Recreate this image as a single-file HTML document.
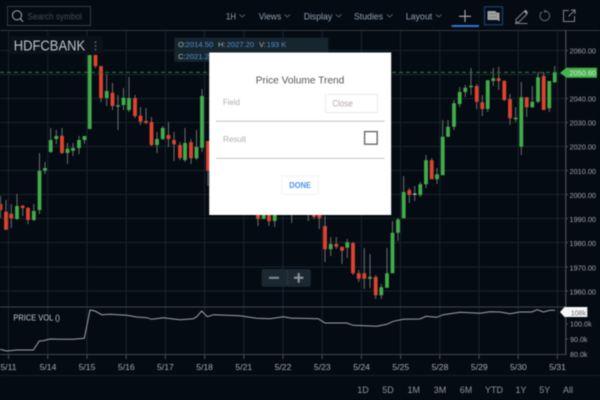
<!DOCTYPE html>
<html><head><meta charset="utf-8"><style>
html,body{margin:0;padding:0;background:#050b13;width:600px;height:400px;overflow:hidden}
svg{display:block;filter:blur(.45px)}
text{font-family:"Liberation Sans",sans-serif}
</style></head><body>
<svg width="600" height="400" viewBox="0 0 600 400" xmlns="http://www.w3.org/2000/svg">
<rect width="600" height="400" fill="#050b13"/>
<!-- grid -->
<path stroke="#18242d" stroke-width="1" fill="none" d="M0 50.5H566M0 74.5H566M0 98.5H566M0 122.5H566M0 146.5H566M0 170.5H566M0 194.5H566M0 218.5H566M0 242.5H566M0 267H566M0 291H566"/>
<path stroke="#18242d" stroke-width="1" fill="none" d="M8.5 31V354M47.7 31V354M87 31V354M126.2 31V354M165.4 31V354M204.6 31V354M243.8 31V354M283 31V354M322.2 31V354M361.4 31V354M400.6 31V354M439.8 31V354M479 31V354M518.2 31V354M557.4 31V354"/>
<!-- chrome lines -->
<path stroke="#30383e" stroke-width="1" fill="none" d="M0 30.5H600"/>
<path stroke="#3c4449" stroke-width="1" fill="none" d="M0 307H566M0 354.5H566"/>
<path stroke="#4a5055" stroke-width="1.2" fill="none" d="M565.8 30V355"/>
<path stroke="#4a5055" stroke-width="1" fill="none" d="M8.5 355V359M47.7 355V359M87 355V359M126.2 355V359M165.4 355V359M204.6 355V359M243.8 355V359M283 355V359M322.2 355V359M361.4 355V359M400.6 355V359M439.8 355V359M479 355V359M518.2 355V359M557.4 355V359"/>
<path stroke="#161e25" stroke-width="1" fill="none" d="M0 375.5H600"/>
<!-- wicks -->
<path stroke="#6a6e72" stroke-width="1" fill="none" d="M.5 196V218M6 200V230M11.3 204V228M17 194V220M22.7 205V216M28 207V224M33.8 204V221M39.5 153V214M45 162V174M50.7 128V153M56.3 130V144M62 128V154M67.5 143V164M73 143V156M79 136V154M84.5 136V144M95.5 55V68M101 66V102M106.7 74V106M112.5 83V110M118 95V130M123.5 88V110M129 77V112M135 95V118M140.5 107V125M146 108V124M151.5 117V146M157 132V153M162.7 126V140M168.5 122V147M174 132V161M180 142V160M185 128V162M191 139V164M196.5 130V160M202 89V152M208 141V186M258 215V226M269 215V226M274.7 215V227M291.7 215V223M308.3 215V221M314 215V219M319.3 215V229M325 216V262M330.7 237V256M336.3 237V249M342 247V264M347.3 239V258M353 242V275M358.7 270V282M364.3 248V289M370 254V288M375.7 275V299M381.3 284V299M387 248V288M392.5 221V273M398 218V241M403.7 176V218M409.3 188V203M414.7 186V201M420.3 182V197M426 155V188M431.7 158V179M437 168V184M442.7 120V175M448 120V137M454 100V130M459.7 87V107M465.3 85V97M471 68V95M476.7 84V109M482.3 95V116M487.7 80V112M493.3 68V86M498.7 67V90M504.3 80V101M510 94V125M515.7 107V122M521.3 82V155M526.7 97V117M532.3 86V108M538 72V103M543.7 72V110M549.3 81V112M554.7 66V83"/>
<path stroke="#c8cccf" stroke-width="3.6" fill="none" d="M414.7 193.5V194.7"/>
<!-- green bodies -->
<path stroke="#41ad49" stroke-width="3.8" fill="none" d="M17 206V219M33.8 211V220M39.5 170.7V210M45 168V170.7M50.7 140V152M56.3 136V139M67.5 148.7V153M73 148V150.7M79 140V148M84.5 136V140M89.7 55V129M106.7 91V98M118 105.3V106.7M123.5 97.7V105M129 98V110M157 139V145M162.7 128V139M185 143V160M196.5 147V158.3M202 96V147.7M263.7 215V219M274.7 215V221M330.7 244V249.3M347.3 242.3V247.7M370 277V278.7M381.3 287.3V295.3M387 273.3V287.7M392.5 232.7V273.3M398 219.5V232.7M403.7 192V218.3M420.3 184.3V195M426 160.3V184.3M437 174.3V179.3M442.7 136.7V175.3M448 126.7V136.7M454 103.3V126.7M459.7 92V104M465.3 87.7V92M471 85.7V87.3M487.7 80.3V109M493.3 78.3V81M515.7 117.7V119.3M521.3 97.3V146.7M532.3 101.7V107.3M538 77.3V101.7M549.3 81V108.3M554.7 72.3V82.3"/>
<!-- red bodies -->
<path stroke="#e0432e" stroke-width="3.8" fill="none" d="M.5 204V210M6 211.7V229.7M11.3 213.7V218.3M22.7 205.7V208M28 208V220M62 135.7V153M95.5 55V66M101 66V98M112.5 92.7V106M135 98V116M140.5 115.7V121.7M146 121V123M151.5 122V145M168.5 135V139M174 140V144.3M180 145V158M191 142.3V158.3M208 141V170.7M258 215V219M269 215V221.3M314 215V217M319.3 215V218.3M325 226V249.3M336.3 244V246.7M342 246.7V250.7M353 243V273.3M358.7 273.3V278.7M364.3 273.3V278.7M375.7 277V295.3M409.3 190V195M431.7 160.3V179.3M476.7 86V101.7M482.3 102.3V109M498.7 78.3V81M504.3 81V100M510 99.3V118.3M526.7 97.3V107.3M543.7 76V110"/>
<!-- last price -->
<path stroke="#2a7d32" stroke-width="1" stroke-dasharray="4 3" fill="none" d="M0 72.4H560"/>
<path fill="#46b34e" d="M560 72.7L566.5 67.7H597V77.7H566.5Z"/>
<text x="569.5" y="75.4" font-size="7.6" fill="#d5efd6" textLength="26.5" lengthAdjust="spacingAndGlyphs">2050.60</text>
<!-- axis labels -->
<g font-size="7.6" fill="#a0a5a9">
<text x="569.5" y="53.3" textLength="26.5" lengthAdjust="spacingAndGlyphs">2060.00</text>
<text x="569.5" y="101.5" textLength="26.5" lengthAdjust="spacingAndGlyphs">2040.00</text>
<text x="569.5" y="125.5" textLength="26.5" lengthAdjust="spacingAndGlyphs">2030.00</text>
<text x="569.5" y="149.7" textLength="26.5" lengthAdjust="spacingAndGlyphs">2020.00</text>
<text x="569.5" y="173.8" textLength="26.5" lengthAdjust="spacingAndGlyphs">2010.00</text>
<text x="569.5" y="198" textLength="26.5" lengthAdjust="spacingAndGlyphs">2000.00</text>
<text x="569.5" y="222" textLength="26.5" lengthAdjust="spacingAndGlyphs">1990.00</text>
<text x="569.5" y="246.2" textLength="26.5" lengthAdjust="spacingAndGlyphs">1980.00</text>
<text x="569.5" y="270.4" textLength="26.5" lengthAdjust="spacingAndGlyphs">1970.00</text>
<text x="569.5" y="294.4" textLength="26.5" lengthAdjust="spacingAndGlyphs">1960.00</text>
<text x="570" y="326.6" textLength="21.7" lengthAdjust="spacingAndGlyphs">100.0k</text>
<text x="570" y="341.8" textLength="17.5" lengthAdjust="spacingAndGlyphs">90.0k</text>
<text x="570" y="357" textLength="17.5" lengthAdjust="spacingAndGlyphs">80.0k</text>
</g>
<path stroke="#4a5055" stroke-width="1" d="M566 50.5H568M566 98.5H568M566 122.5H568M566 146.5H568M566 170.5H568M566 194.5H568M566 218.5H568M566 242.5H568M566 267H568M566 291H568M566 324H568M566 339H568"/>
<!-- symbol -->
<rect x="10" y="36" width="93" height="18" fill="#0a121a"/>
<text x="13.7" y="50.7" font-size="14.4" fill="#bcc3c8" textLength="71.5" lengthAdjust="spacingAndGlyphs">HDFCBANK</text>
<path stroke="#6d7377" stroke-width="1.5" stroke-dasharray="1.5 2.2" d="M95.5 41.5V51"/>
<!-- OHLC tooltip -->
<rect x="174.3" y="37.7" width="154" height="24" fill="#17252f"/>
<g font-size="7.6">
<text x="178" y="47" fill="#a9b1b7">O:</text><text x="185.7" y="47" fill="#4d93cf" textLength="27.6" lengthAdjust="spacingAndGlyphs">2014.50</text>
<text x="218" y="47" fill="#a9b1b7">H:</text><text x="226.7" y="47" fill="#4d93cf" textLength="27.6" lengthAdjust="spacingAndGlyphs">2027.20</text>
<text x="259" y="47" fill="#a9b1b7">V:</text><text x="266.7" y="47" fill="#4d93cf" textLength="19.5" lengthAdjust="spacingAndGlyphs">193 K</text>
<text x="178" y="59" fill="#a9b1b7">C:</text><text x="185.7" y="59" fill="#4d93cf" textLength="27.6" lengthAdjust="spacingAndGlyphs">2021.20</text>
</g>
<!-- top bar -->
<rect x="7.5" y="6.5" width="83" height="19" fill="none" stroke="#333b41" stroke-width="1"/>
<circle cx="17" cy="15.3" r="4.6" fill="none" stroke="#a5abaf" stroke-width="1"/>
<path d="M20.3 18.6L23 21.8" stroke="#a5abaf" stroke-width="1.1"/>
<text x="27.5" y="19.6" font-size="9.2" fill="#454d53" textLength="54.5" lengthAdjust="spacingAndGlyphs">Search symbol</text>
<g font-size="9.2" fill="#8ea2b4">
<text x="226" y="19.4" textLength="10" lengthAdjust="spacingAndGlyphs">1H</text>
<text x="258.7" y="19.4" textLength="22.5" lengthAdjust="spacingAndGlyphs">Views</text>
<text x="303.7" y="19.4" textLength="28.5" lengthAdjust="spacingAndGlyphs">Display</text>
<text x="354" y="19.4" textLength="29" lengthAdjust="spacingAndGlyphs">Studies</text>
<text x="405.7" y="19.4" textLength="26.5" lengthAdjust="spacingAndGlyphs">Layout</text>
</g>
<path fill="none" stroke="#55616b" stroke-width=".9" d="M239.5 14.5L242.2 17L245 14.5M284.5 14.5L287.2 17L290 14.5M336 14.5L338.7 17L341.5 14.5M387 14.5L389.7 17L392.5 14.5M436 14.5L438.7 17L441.5 14.5"/>
<path stroke="#a7acaf" stroke-width="1.1" d="M459 16.3H471M465 10V22"/>
<rect x="451.7" y="25" width="27.3" height="2" fill="#2a76dc"/>
<rect x="484.5" y="6.8" width="18" height="18" fill="none" stroke="#17426c" stroke-width="1.2"/>
<path fill="#9ea3a7" d="M487.5 11H495.5L496.5 12.5H499.5V21.5L497.5 20H487.5Z"/>
<path stroke="#6c7276" stroke-width=".8" d="M489 14H497M489 17H497"/>
<path fill="none" stroke="#7f8589" stroke-width="1" d="M516 19.5L524 11.5L527 14L519 22L516 22.5ZM515 23.5H527.5"/>
<path fill="#9ea3a7" d="M524 11L525.5 9.8L528 12.2L527 13.6Z"/>
<path fill="none" stroke="#62686c" stroke-width="1" d="M542.2 11.8A4.8 4.8 0 1 0 546 11.2"/>
<path fill="#62686c" d="M544 9.5L547 11.2L544.4 13Z"/>
<path fill="none" stroke="#7f8589" stroke-width="1" d="M569 10.5H563.5V21.5H574.5V16M568.5 16.5L574.8 10.2M571 10H575V14"/>
<!-- modal -->
<rect x="209.2" y="52.5" width="182" height="162.5" fill="#fff"/>
<text x="255.7" y="83.5" font-size="10.4" fill="#565656" textLength="88.6" lengthAdjust="spacingAndGlyphs">Price Volume Trend</text>
<text x="223" y="105" font-size="8.4" fill="#adadad" textLength="17" lengthAdjust="spacingAndGlyphs">Field</text>
<rect x="325.3" y="94.5" width="52" height="18" fill="#fff" stroke="#dcdcdc" stroke-width="1" stroke-dasharray="1.5 1"/>
<text x="332.3" y="106.5" font-size="8.8" fill="#b0a8a4" textLength="20.4" lengthAdjust="spacingAndGlyphs">Close</text>
<rect x="216" y="120.5" width="168.5" height="1.4" fill="#cfd2d4"/>
<text x="223" y="142" font-size="8.4" fill="#adadad" textLength="23" lengthAdjust="spacingAndGlyphs">Result</text>
<rect x="364.6" y="131.6" width="12.6" height="12.6" fill="#fff" stroke="#5c5f61" stroke-width="1.3"/>
<rect x="216" y="157.7" width="168.5" height="1.3" fill="#cfd2d4"/>
<rect x="281.7" y="176" width="36.6" height="18.3" fill="#fff" stroke="#f1f2f3" stroke-width="1"/>
<text x="289.3" y="188" font-size="8.2" font-weight="700" fill="#4b93ec" textLength="21.7" lengthAdjust="spacingAndGlyphs">DONE</text>
<!-- zoom control -->
<rect x="261.7" y="269" width="49" height="17.7" rx="2" fill="#1c2831"/>
<rect x="269" y="276.8" width="10" height="2" fill="#848c92"/>
<path stroke="#3a454d" stroke-width="1" stroke-dasharray="1.5 1.5" d="M287.7 271V285"/>
<path stroke="#8f979c" stroke-width="2" d="M294 277.8H303.4M298.7 273V282.6"/>
<!-- indicator -->
<text x="13.4" y="320.6" font-size="8" fill="#c5ccd3" textLength="46.6" lengthAdjust="spacingAndGlyphs">PRICE VOL ()</text>
<polyline fill="none" stroke="#a0a4a7" stroke-width="1" points="0,349.3 6.7,351 16.7,350 33.3,350 39.3,341 43.3,340.7 50,339 60,339.3 73.3,339.3 84.3,338.3 90,310 95,311 101.7,314.7 110,314.3 126.7,315.3 136.7,317 146.7,317.7 151.7,319.3 163.3,317.7 180,319.7 193.3,318.7 196.7,316.7 201.7,311 207.3,316.7 213.3,314.7 226.7,315.3 240,315.7 256.7,318.3 270,318.7 283.3,316.7 291.7,318.3 300,318.3 318.3,318.7 325,323 346.7,323 353.3,325.3 376.7,326.3 386.7,324.3 393.3,321.3 403.3,319.3 420,319 426,316.3 436.7,317.3 443.3,314.7 460,312.3 480,313.3 490,311.7 500,312 510,313.7 520,312 531.7,312 537.3,309.7 543.3,312 550,310.3 555,310.3"/>
<path fill="#f6f7f8" d="M560 312L564.5 307H587.3V317H564.5Z"/>
<text x="570.7" y="315.3" font-size="7.6" fill="#6a6f73" textLength="15.3" lengthAdjust="spacingAndGlyphs">108k</text>
<!-- date labels -->
<g font-size="8.6" fill="#a3abb1" text-anchor="middle">
<text x="8.5" y="370">5/11</text><text x="48" y="370">5/14</text><text x="87" y="370">5/15</text><text x="126.3" y="370">5/16</text><text x="165.4" y="370">5/17</text><text x="204.6" y="370">5/18</text><text x="243.8" y="370">5/21</text><text x="283" y="370">5/22</text><text x="322.3" y="370">5/23</text><text x="361.6" y="370">5/24</text><text x="400.8" y="370">5/25</text><text x="440" y="370">5/28</text><text x="479.3" y="370">5/29</text><text x="518.4" y="370">5/30</text><text x="557.6" y="370">5/31</text>
</g>
<!-- ranges -->
<g font-size="9" fill="#8797a5" text-anchor="middle">
<text x="363" y="393">1D</text><text x="388" y="393">5D</text><text x="413.7" y="393">1M</text><text x="440" y="393">3M</text><text x="466" y="393">6M</text><text x="494" y="393">YTD</text><text x="521" y="393">1Y</text><text x="544.7" y="393">5Y</text><text x="568" y="393">All</text>
</g>
</svg>
</body></html>
